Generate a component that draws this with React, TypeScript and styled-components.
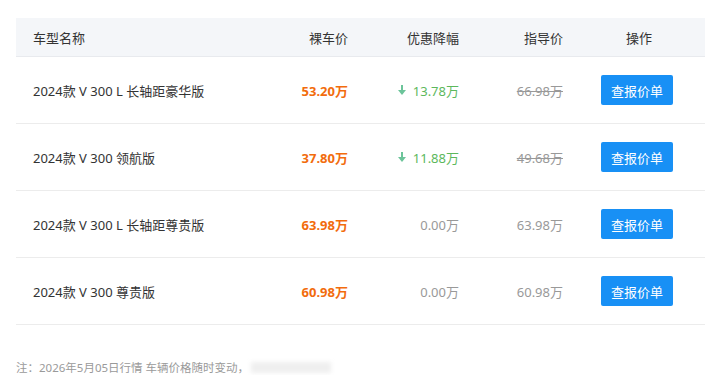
import React, { ReactElement } from 'react';
import styled, { createGlobalStyle } from 'styled-components';

interface Trim {
  name: string;
  price: string;
  discount: string;
  guide: string;
}

const trims: Trim[] = [
  { name: '2024款 V 300 L 长轴距豪华版', price: '53.20万', discount: '13.78万', guide: '66.98万' },
  { name: '2024款 V 300 领航版', price: '37.80万', discount: '11.88万', guide: '49.68万' },
  { name: '2024款 V 300 L 长轴距尊贵版', price: '63.98万', discount: '0.00万', guide: '63.98万' },
  { name: '2024款 V 300 尊贵版', price: '60.98万', discount: '0.00万', guide: '60.98万' },
];

const GlobalStyle = createGlobalStyle`
  body {
    margin: 0;
    background: #fff;
    font-family: "Noto Sans", "Noto Sans CJK SC", sans-serif;
    color: #333;
  }
`;

const Page = styled.div`
  padding: 18px 15px 0 16px;
`;

const Table = styled.div`
  display: grid;
  grid-template-columns: 242px 100px 111px 104px 132px;
`;

const HeadCell = styled.div<{ $align?: string }>`
  height: 38px;
  display: flex;
  align-items: center;
  justify-content: ${(p) => p.$align || 'flex-start'};
  padding: ${(p) => (p.$align === 'flex-start' || !p.$align ? '0 0 0 17px' : p.$align === 'center' ? '0' : '0 10px 0 0')};
  background: #f4f6f9;
  border-bottom: 1px solid #e8eaee;
  font-size: 13px;
  color: #333;
`;

const Cell = styled.div<{ $align?: string }>`
  height: 66px;
  display: flex;
  align-items: center;
  justify-content: ${(p) => p.$align || 'flex-start'};
  padding: ${(p) => (p.$align === 'flex-start' || !p.$align ? '0 0 0 17px' : p.$align === 'center' ? '0' : '0 10px 0 0')};
  border-bottom: 1px solid #ececec;
  font-size: 13px;
  color: #333;
`;

const Price = styled.span`
  color: #f26c0d;
  font-weight: 700;
`;

const Discount = styled.span<{ $down: boolean }>`
  display: inline-flex;
  align-items: center;
  gap: 7px;
  color: ${(p) => (p.$down ? '#5cb85c' : '#999')};
`;

const Guide = styled.span<{ $struck: boolean }>`
  color: #999;
  text-decoration: ${(p) => (p.$struck ? 'line-through' : 'none')};
`;

const QuoteButton = styled.button`
  width: 72px;
  height: 30px;
  margin-left: -4px;
  border: none;
  border-radius: 2px;
  background: #1890f5;
  color: #fff;
  font-family: inherit;
  font-size: 13px;
  cursor: pointer;
`;

const Note = styled.p`
  margin: 34px 0 0;
  font-size: 11.5px;
  color: #9a9a9a;
  display: flex;
  align-items: center;
`;

const Blur = styled.span`
  display: inline-block;
  width: 80px;
  height: 11px;
  margin-left: 2px;
  background: #efefef;
  filter: blur(2px);
`;

const DownArrow = () => (
  <svg width="8" height="10" viewBox="0 0 8 10">
    <rect x="3" y="0" width="2" height="6" fill="#6cc49a" />
    <path d="M0 5 L8 5 L4 10 Z" fill="#6cc49a" />
  </svg>
);

export default (): ReactElement => (
  <Page>
    <GlobalStyle />
    <Table>
      <HeadCell>车型名称</HeadCell>
      <HeadCell $align="flex-end">裸车价</HeadCell>
      <HeadCell $align="flex-end">优惠降幅</HeadCell>
      <HeadCell $align="flex-end">指导价</HeadCell>
      <HeadCell $align="center">操作</HeadCell>
      {trims.map((t) => {
        const down = t.discount !== '0.00万';
        return (
          <React.Fragment key={t.name}>
            <Cell>{t.name}</Cell>
            <Cell $align="flex-end">
              <Price>{t.price}</Price>
            </Cell>
            <Cell $align="flex-end">
              <Discount $down={down}>
                {down && <DownArrow />}
                {t.discount}
              </Discount>
            </Cell>
            <Cell $align="flex-end">
              <Guide $struck={down}>{t.guide}</Guide>
            </Cell>
            <Cell $align="center">
              <QuoteButton>查报价单</QuoteButton>
            </Cell>
          </React.Fragment>
        );
      })}
    </Table>
    <Note>
      注：2026年5月05日行情 车辆价格随时变动，<Blur />
    </Note>
  </Page>
);
